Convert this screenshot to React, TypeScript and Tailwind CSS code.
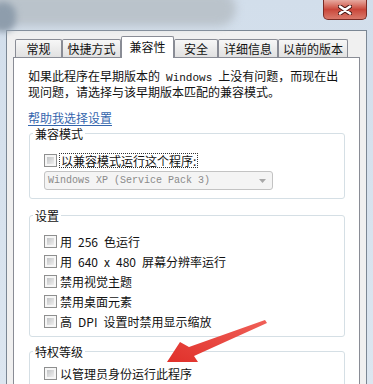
import type { ReactNode } from "react";

const tabs = [
  { label: "常规", w: "w-[47px]", active: false },
  { label: "快捷方式", w: "w-[59px]", active: false },
  { label: "兼容性", w: "w-[53px]", active: true },
  { label: "安全", w: "w-[44px]", active: false },
  { label: "详细信息", w: "w-[60px]", active: false },
  { label: "以前的版本", w: "w-[70px]", active: false },
];

function Checkbox() {
  return (
    <span className="flex w-[13px] h-[13px] shrink-0 border border-[#8e8f8f] bg-[#f6f6f6] p-[2px]">
      <span className="flex-1 bg-linear-to-br from-[#c2c4c6] to-[#efefef]" />
    </span>
  );
}

function CheckRow({ children }: { children: ReactNode }) {
  return (
    <div className="flex items-center gap-[3px] h-[20px]">
      <Checkbox />
      <span>{children}</span>
    </div>
  );
}

function Group({ title, className, children }: { title: string; className: string; children: ReactNode }) {
  return (
    <fieldset className={`ml-px border border-[#d5dfe5] rounded-[3px] pl-[14px] ${className}`}>
      <legend className="-ml-[11px] px-[2px] leading-[13px]">{title}</legend>
      {children}
    </fieldset>
  );
}

export default function App() {
  return (
    <div className="relative flex flex-col w-[373px] h-[384px] overflow-hidden bg-linear-to-b from-[#d2deeb] to-[#dce6f0] font-['Noto_Sans_CJK_SC',sans-serif] text-[12px] leading-[13px] text-[#111]">
      {/* title bar (blurred) */}
      <div className="relative h-[30px] shrink-0 flex justify-end pr-[6px]">
        <div className="absolute -left-[14px] -top-[8px] w-[250px] h-[34px] rounded-full bg-[#bac3cb] blur-[4px]" />
        <div className="absolute -left-[10px] top-[2px] w-[26px] h-[30px] rounded-full bg-[#8e9dac] blur-[3px]" />
        <div className="relative flex items-center justify-center w-[44px] h-[20px] rounded-b-[5px] border border-t-0 border-[#7a2b25] bg-linear-to-b from-[#e6a9a0] via-[#c9463a] to-[#d9796b]">
          <svg width="14" height="10" viewBox="0 0 14 10">
            <path d="M2 1.5 L12 8.5 M12 1.5 L2 8.5" stroke="#4a1814" strokeWidth="4.5" strokeLinecap="round" />
            <path d="M2 1.5 L12 8.5 M12 1.5 L2 8.5" stroke="#ffffff" strokeWidth="2.6" strokeLinecap="round" />
          </svg>
        </div>
      </div>

      {/* client area */}
      <div className="flex-1 flex flex-col mx-[6px] border border-b-0 border-[#7b8794] bg-[#f0f0f0] px-[6px]">
        <div className="flex items-end pl-[2px] pt-[5px]">
          {tabs.map((t) =>
            t.active ? (
              <div
                key={t.label}
                className={`relative z-10 -mb-px flex items-center justify-center h-[22px] ${t.w} border border-b-0 border-[#898c95] rounded-t-[2px] bg-white pb-[2px]`}
              >
                {t.label}
              </div>
            ) : (
              <div
                key={t.label}
                className={`flex items-center justify-center h-[18px] ${t.w} border border-b-0 border-[#898c95] rounded-t-[2px] bg-linear-to-b from-[#f7f7f7] to-[#e1e1e1]`}
              >
                {t.label}
              </div>
            )
          )}
        </div>

        <div className="flex-1 border border-b-0 border-[#898c95] bg-white px-[14px] pt-[11px]">
          <p>
            如果此程序在早期版本的{"\u2002"}
            <span className="font-['Liberation_Mono',monospace] text-[11px]">Windows</span>
            {"\u2002"}上没有问题，而现在出
            <br />
            现问题，请选择与该早期版本匹配的兼容模式。
          </p>
          <a className="block w-fit mt-[13px] h-[13px] text-[#3566ad] underline underline-offset-2 decoration-[#3566ad]">
            帮助我选择设置
          </a>

          <Group title="兼容模式" className="mt-[3px] pt-[12px] pb-[8px]">
            <div className="flex items-center gap-[2px] h-[16px]">
              <Checkbox />
              <span className="border border-dotted border-[#333] px-px">以兼容模式运行这个程序:</span>
            </div>
            <div className="mt-[3px] flex items-center justify-between w-[229px] h-[19px] border border-[#c3c3c3] rounded-[3px] bg-[#f4f4f4] pl-[3px] pr-[6px] font-['Liberation_Mono',monospace] text-[10px] text-[#8a8a8a]">
              <span>Windows XP (Service Pack 3)</span>
              <svg width="7" height="4" viewBox="0 0 7 4">
                <path d="M0 0 L7 0 L3.5 4 Z" fill="#a8a8a8" />
              </svg>
            </div>
          </Group>

          <Group title="设置" className="mt-[10px] pt-[9px] pb-[5px]">
            <CheckRow>用{"\u2002"}256{"\u2002"}色运行</CheckRow>
            <CheckRow>用{"\u2002"}640{"\u2002"}x{"\u2002"}480{"\u2002"}屏幕分辨率运行</CheckRow>
            <CheckRow>禁用视觉主题</CheckRow>
            <CheckRow>禁用桌面元素</CheckRow>
            <CheckRow>高{"\u2002"}DPI{"\u2002"}设置时禁用显示缩放</CheckRow>
          </Group>

          <Group title="特权等级" className="mt-[8px] pt-[5px] pb-[8px]">
            <CheckRow>以管理员身份运行此程序</CheckRow>
          </Group>
        </div>
      </div>

      {/* red annotation arrow */}
      <svg className="absolute left-0 top-0 pointer-events-none" width="373" height="384" viewBox="0 0 373 384">
        <defs>
          <linearGradient id="arr" x1="0" y1="1" x2="1" y2="0">
            <stop offset="0" stopColor="#e0302a" />
            <stop offset="1" stopColor="#f06058" />
          </linearGradient>
        </defs>
        <polygon
          points="167,362 180,342 189,347 265,320 267,323 194,356 198,362"
          fill="url(#arr)"
        />
      </svg>
    </div>
  );
}
